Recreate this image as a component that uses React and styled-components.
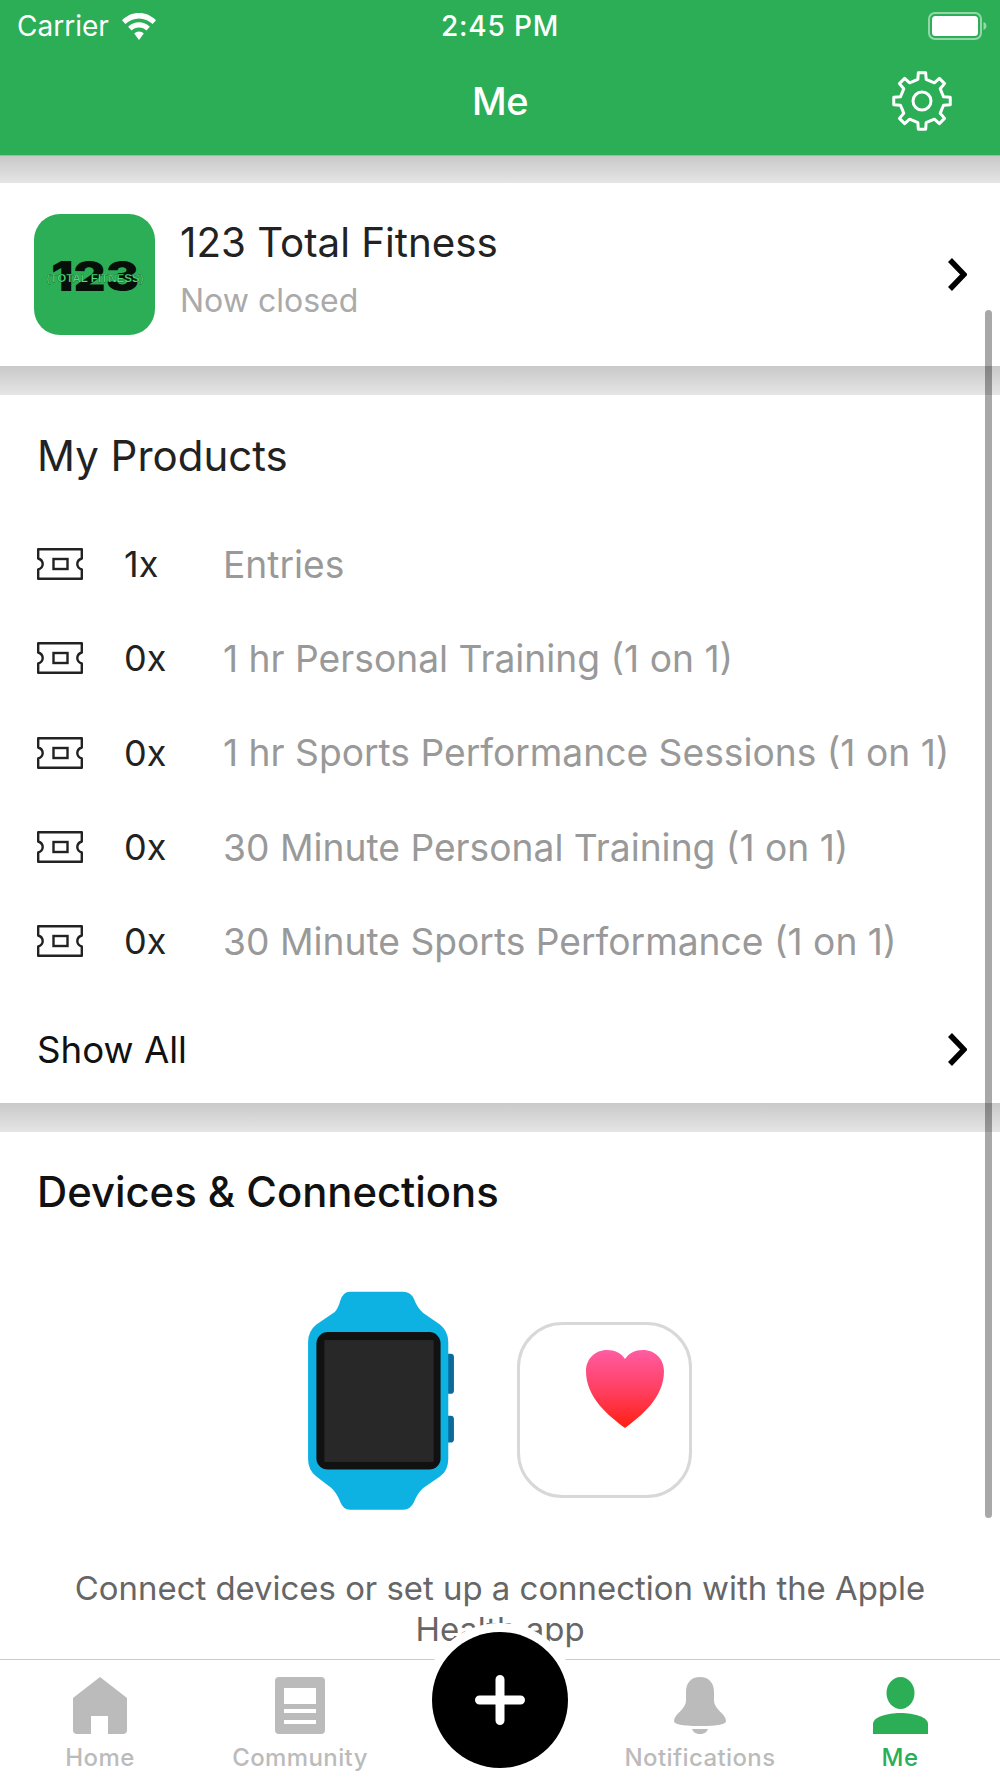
import React from 'react';
import styled, { createGlobalStyle } from 'styled-components';

const GREEN = '#2bae56';
const FONT = 'Inter, "Liberation Sans", sans-serif';

const GlobalStyle = createGlobalStyle`
  html, body { margin: 0; padding: 0; background: #fff; }
  * { box-sizing: border-box; }
`;

const Phone = styled.div`
  position: relative;
  width: 1000px;
  height: 1778px;
  display: flex;
  flex-direction: column;
  overflow: hidden;
  background: #fff;
  font-family: ${FONT};
`;

const Header = styled.header`
  flex: none;
  height: 156px;
  background: ${GREEN};
  border-bottom: 1px solid #9fb8a6;
  color: #fff;
  display: flex;
  flex-direction: column;
`;

const StatusBar = styled.div`
  height: 52px;
  padding: 0 13px;
  display: grid;
  grid-template-columns: 1fr auto 1fr;
  align-items: center;
  font-size: 28px;
`;

const Carrier = styled.div`
  padding-left: 4px;
  display: flex;
  align-items: center;
  gap: 13px;
`;

const Time = styled.div`
  font-weight: 500;
  letter-spacing: 0.8px;
`;

const BatteryWrap = styled.div`
  justify-self: end;
  display: flex;
`;

const NavBar = styled.div`
  flex: 1;
  position: relative;
  display: flex;
  align-items: center;
  justify-content: center;
  padding-bottom: 5px;
`;

const NavTitle = styled.h1`
  margin: 0;
  font-size: 38px;
  font-weight: 500;
  letter-spacing: -0.4px;
`;

const GearButton = styled.div`
  position: absolute;
  right: 48px;
  top: 19px;
  display: flex;
`;

const Scroll = styled.main`
  flex: 1;
  min-height: 0;
  overflow: hidden;
`;

const Band = styled.div`
  height: ${(p) => p.$height || 29}px;
  background: linear-gradient(#c9c9c9, #e5e5e5);
`;

const GymCard = styled.section`
  height: 183px;
  padding: 0 34px;
  display: flex;
  align-items: center;
  gap: 25px;
`;

const Logo = styled.div`
  flex: none;
  width: 121px;
  height: 121px;
  border-radius: 26px;
  background: ${GREEN};
  display: flex;
  align-items: center;
  justify-content: center;
`;

const GymText = styled.div`
  flex: 1;
  display: flex;
  flex-direction: column;
  gap: 15px;
  margin-top: -9px;
`;

const GymName = styled.div`
  font-size: 40.3px;
  line-height: 46px;
  color: #222;
`;

const GymStatus = styled.div`
  font-size: 32px;
  line-height: 40px;
  color: #aaa;
`;

const Chevron = styled.svg`
  flex: none;
  margin-right: -1px;
`;

const Products = styled.section`
  height: 708px;
  padding: 36px 34px 0 37px;
`;

const SectionTitle = styled.h2`
  margin: 0;
  font-size: ${(p) => (p.$strong ? 41.8 : 42)}px;
  line-height: 50px;
  font-weight: ${(p) => (p.$strong ? 500 : 400)};
  color: ${(p) => (p.$strong ? '#111' : '#222')};
`;

const ProductList = styled.div`
  margin-top: 36px;
  display: flex;
  flex-direction: column;
`;

const ProductRow = styled.div`
  height: 94.3px;
  display: flex;
  align-items: center;
`;

const Count = styled.span`
  width: 100px;
  margin-left: 41px;
  font-size: 36px;
  color: #222;
  flex: none;
`;

const ProductName = styled.span`
  font-size: 37.2px;
  color: #999;
  white-space: nowrap;
  margin-left: -1px;
`;

const ShowAll = styled.div`
  height: 60px;
  margin-top: 31px;
  display: flex;
  align-items: center;
  justify-content: space-between;
  font-size: 36.7px;
  color: #111;
`;

const Devices = styled.section`
  padding: 35px 37px 0;
`;

const Illustrations = styled.div`
  margin-top: 74px;
  display: flex;
  justify-content: center;
  align-items: flex-start;
  gap: 62px;
`;

const HealthSlot = styled.div`
  margin-top: 31px;
  display: flex;
`;

const ConnectText = styled.p`
  margin: 58px 0 0;
  padding: 0 20px;
  text-align: center;
  font-size: 32.9px;
  line-height: 41px;
  color: #666;
`;

const TabBar = styled.nav`
  flex: none;
  height: 119px;
  border-top: 1px solid #ccc;
  background: #fff;
  display: grid;
  grid-template-columns: repeat(5, 200px);
  position: relative;
  z-index: 1;
`;

const Tab = styled.div`
  padding-top: 17px;
  display: flex;
  flex-direction: column;
  align-items: center;
  color: ${(p) => (p.$active ? GREEN : '#bbb')};
`;

const TabIcon = styled.div`
  height: 57px;
  display: flex;
`;

const TabLabel = styled.span`
  margin-top: 9px;
  font-size: 24px;
  line-height: 30px;
  font-weight: 500;
  letter-spacing: 0.4px;
  white-space: nowrap;
`;

const Fab = styled.button`
  position: absolute;
  left: 432px;
  top: 1632px;
  z-index: 2;
  width: 136px;
  height: 136px;
  border: 0;
  padding: 0;
  border-radius: 50%;
  background: #000;
  box-shadow: 0 0 0 9px #fff;
  display: flex;
  align-items: center;
  justify-content: center;
`;

const ScrollThumb = styled.div`
  position: absolute;
  left: 985px;
  top: 310px;
  z-index: 1;
  width: 7px;
  height: 1208px;
  border-radius: 4px;
  background: rgba(0, 0, 0, 0.34);
`;

const LogoSvg = styled.svg`
  overflow: visible;
`;

const TicketBox = styled.svg`
  flex: none;
`;

const products = [
  { count: '1x', name: 'Entries' },
  { count: '0x', name: '1 hr Personal Training (1 on 1)' },
  { count: '0x', name: '1 hr Sports Performance Sessions (1 on 1)' },
  { count: '0x', name: '30 Minute Personal Training (1 on 1)' },
  { count: '0x', name: '30 Minute Sports Performance (1 on 1)' },
];

const WifiIcon = () => (
  <svg width="34" height="27" viewBox="0 0 36 27" fill="#fff" preserveAspectRatio="none">
    <path d="M18 0C11 0 5 2.6 0 7.2l3.6 3.9C7.6 7.5 12.6 5.4 18 5.4s10.4 2.1 14.4 5.7L36 7.2C31 2.6 25 0 18 0z" />
    <path d="M18 9.2c-4.4 0-8.4 1.7-11.5 4.5l3.6 3.9c2.1-1.9 4.9-3 7.9-3s5.8 1.1 7.9 3l3.6-3.9C26.4 10.9 22.4 9.2 18 9.2z" />
    <path d="M18 18.5c-2 0-3.8.8-5.1 2L18 27l5.1-6.5c-1.3-1.2-3.1-2-5.1-2z" />
  </svg>
);

const BatteryIcon = () => (
  <svg width="59" height="28" viewBox="0 0 59 28">
    <rect x="1" y="1" width="52" height="26" rx="6" fill="none" stroke="#fff" strokeOpacity="0.5" strokeWidth="2" />
    <rect x="4" y="4" width="46" height="20" rx="3.5" fill="#fff" />
    <path d="M55.5 10c1.8.6 3 2.2 3 4s-1.2 3.4-3 4z" fill="#fff" fillOpacity="0.5" />
  </svg>
);

// eight square teeth round a ring
const gearPath = () => {
  const cx = 30;
  const cy = 30;
  const pts = [];
  for (let i = 0; i < 8; i++) {
    const a = (i * Math.PI) / 4 - Math.PI / 2;
    [
      [-0.42, 21.5],
      [-0.19, 22],
      [-0.13, 28.5],
      [0.13, 28.5],
      [0.19, 22],
      [0.42, 21.5],
    ].forEach(([d, r]) => {
      pts.push(`${(cx + r * Math.cos(a + d)).toFixed(2)} ${(cy + r * Math.sin(a + d)).toFixed(2)}`);
    });
  }
  return `M${pts.join('L')}Z`;
};

const GearIcon = () => (
  <svg width="60" height="60" viewBox="0 0 60 60" fill="none" stroke="#fff" strokeWidth="3" strokeLinejoin="round">
    <path d={gearPath()} />
    <circle cx="30" cy="30" r="9" />
  </svg>
);

const ChevronIcon = () => (
  <Chevron width="20" height="35" viewBox="0 0 20 35" fill="none">
    <path d="M3 3l14 14.5L3 32" stroke="#000" strokeWidth="5.5" />
  </Chevron>
);

const TicketIcon = () => (
  <TicketBox width="46" height="32" viewBox="0 0 46 32" fill="none" stroke="#222" strokeWidth="2.4">
    <path d="M1.2 1.2h43.6v9.3c-3 1-4.5 3-4.5 5.5s1.5 4.5 4.5 5.5v9.3H1.2v-9.3c3-1 4.5-3 4.5-5.5s-1.5-4.5-4.5-5.500z" strokeLinejoin="round" />
    <rect x="16.5" y="11" width="14" height="10" />
  </TicketBox>
);

const LogoMark = () => (
  <LogoSvg width="110" height="42" viewBox="0 0 110 42">
    <text x="55" y="37" textAnchor="middle" fontFamily="Inter, sans-serif" fontWeight="900" fontSize="41" textLength="88" lengthAdjust="spacingAndGlyphs" fill="#060f08">123</text>
    <text x="55" y="28" textAnchor="middle" fontFamily="'Liberation Sans', sans-serif" fontWeight="700" fontSize="11.5" textLength="97" lengthAdjust="spacingAndGlyphs" fill="#4fdc7d" stroke="#04140a" strokeWidth="0.25">(TOTAL FITNESS)</text>
  </LogoSvg>
);

const WatchIcon = () => (
  <svg width="147" height="219" viewBox="85 62 440 656">
    <rect x="495" y="250" width="27" height="120" rx="10" fill="#0a6a9b" />
    <rect x="495" y="436" width="27" height="80" rx="10" fill="#0a6a9b" />
    <path
      d="M210 64H370Q392 64 402 85Q412 112 430 128L480 162Q505 182 505 215V565Q505 600 480 618L430 652Q412 668 402 695Q392 717 370 717H210Q190 717 182 695Q172 668 155 652L110 618Q85 598 85 565V215Q85 182 110 162L165 125Q175 115 182 90Q190 64 210 64Z"
      fill="#0db2e2"
    />
    <rect x="110" y="185" width="372" height="412" rx="34" fill="#111" />
    <rect x="134" y="209" width="327" height="365" fill="#282828" />
  </svg>
);

const HealthIcon = () => (
  <svg width="175" height="176" viewBox="0 0 175 176">
    <defs>
      <linearGradient id="heartFill" x1="0" y1="0" x2="0" y2="1">
        <stop offset="0" stopColor="#ff5ca3" />
        <stop offset="0.55" stopColor="#ff3d5c" />
        <stop offset="1" stopColor="#ff1f12" />
      </linearGradient>
    </defs>
    <rect x="1.5" y="1.5" width="172" height="173" rx="44" fill="#fff" stroke="#d8d8d8" strokeWidth="3" />
    <path
      d="M108 106C92 94 69 76 69 49C69 37 78 28 90 28C98 28 104 31 108 37C112 31 118 28 126 28C138 28 147 37 147 49C147 76 124 94 108 106Z"
      fill="url(#heartFill)"
    />
  </svg>
);

const HomeIcon = () => (
  <svg width="54" height="57" viewBox="0 0 54 57" fill="currentColor">
    <path d="M27 0L54 21V53Q54 57 50 57H35V39H18V57H4Q0 57 0 53V21Z" />
  </svg>
);

const CommunityIcon = () => (
  <svg width="50" height="57" viewBox="0 0 50 57" fill="currentColor">
    <path fillRule="evenodd" d="M4 0H46Q50 0 50 4V53Q50 57 46 57H4Q0 57 0 53V4Q0 0 4 0ZM9 11V27H41V11ZM9 32V36H41V32ZM9 43V47H41V43Z" />
  </svg>
);

const BellIcon = () => (
  <svg width="52" height="57" viewBox="0 0 52 57" fill="currentColor">
    <path d="M26 0C35 0 40 6 40 15V24C40 32 52 37 52 44C52 48 40 49 26 49C12 49 0 48 0 44C0 37 12 32 12 24V15C12 6 17 0 26 0Z" />
    <path d="M18 52H34C33 55 30 57 26 57C22 57 19 55 18 52Z" />
  </svg>
);

const PersonIcon = () => (
  <svg width="55" height="57" viewBox="0 0 55 57" fill="currentColor">
    <ellipse cx="27.5" cy="16" rx="14" ry="16" />
    <path d="M0 57V47C0 40 14 36 27.5 36S55 40 55 47V57Z" />
  </svg>
);

const tabs = [
  { label: 'Home', icon: <HomeIcon /> },
  { label: 'Community', icon: <CommunityIcon /> },
  null,
  { label: 'Notifications', icon: <BellIcon /> },
  { label: 'Me', icon: <PersonIcon />, active: true },
];

const App = () => {
  return (
    <Phone>
      <GlobalStyle />
      <Header>
        <StatusBar>
          <Carrier>
            Carrier
            <WifiIcon />
          </Carrier>
          <Time>2:45 PM</Time>
          <BatteryWrap>
            <BatteryIcon />
          </BatteryWrap>
        </StatusBar>
        <NavBar>
          <NavTitle>Me</NavTitle>
          <GearButton>
            <GearIcon />
          </GearButton>
        </NavBar>
      </Header>

      <Scroll>
        <Band $height={27} />
        <GymCard>
          <Logo>
            <LogoMark />
          </Logo>
          <GymText>
            <GymName>123 Total Fitness</GymName>
            <GymStatus>Now closed</GymStatus>
          </GymText>
          <ChevronIcon />
        </GymCard>
        <Band />
        <Products>
          <SectionTitle>My Products</SectionTitle>
          <ProductList>
            {products.map((item) => (
              <ProductRow key={item.name}>
                <TicketIcon />
                <Count>{item.count}</Count>
                <ProductName>{item.name}</ProductName>
              </ProductRow>
            ))}
          </ProductList>
          <ShowAll>
            Show All
            <ChevronIcon />
          </ShowAll>
        </Products>
        <Band />
        <Devices>
          <SectionTitle $strong>Devices &amp; Connections</SectionTitle>
          <Illustrations>
            <WatchIcon />
            <HealthSlot>
              <HealthIcon />
            </HealthSlot>
          </Illustrations>
          <ConnectText>Connect devices or set up a connection with the Apple Health app</ConnectText>
        </Devices>
      </Scroll>

      <TabBar>
        {tabs.map((tab, i) =>
          tab ? (
            <Tab key={tab.label} $active={tab.active}>
              <TabIcon>{tab.icon}</TabIcon>
              <TabLabel>{tab.label}</TabLabel>
            </Tab>
          ) : (
            <div key={i} />
          )
        )}
      </TabBar>

      <Fab aria-label="Add">
        <svg width="50" height="50" viewBox="0 0 50 50">
          <path d="M25 4.500V45.500M4.500 25H45.500" stroke="#fff" strokeWidth="9" strokeLinecap="round" />
        </svg>
      </Fab>
      <ScrollThumb />
    </Phone>
  );
};

export default App;
